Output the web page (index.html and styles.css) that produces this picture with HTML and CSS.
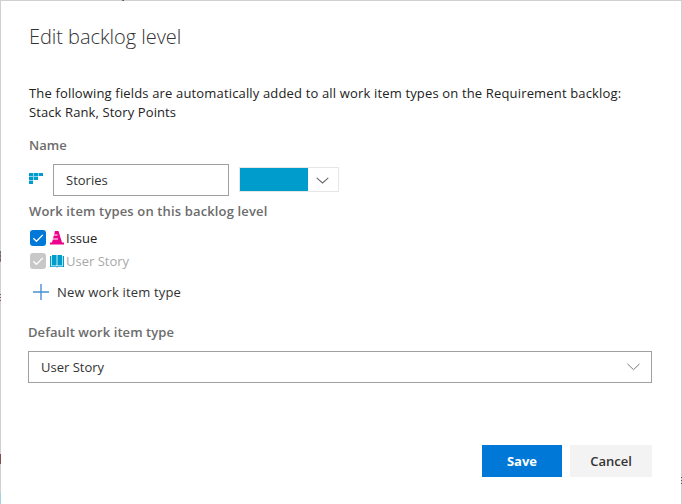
FILE: index.html
```html
<!DOCTYPE html>
<html lang="en">
<head>
<meta charset="utf-8">
<title>Edit backlog level</title>
<link rel="stylesheet" href="styles.css">
</head>
<body>
<main class="dialog">
  <h1 class="title"><span>Edit backlog level</span></h1>
  <p class="intro"><span class="intro-a">The following fields are automatically added to all work item types on the Requirement backlog:</span><br><span class="intro-b">Stack Rank, Story Points</span></p>
  <h2 class="label label-name"><span>Name</span></h2>
  <div class="name-row">
    <svg class="backlog-icon" width="15" height="12" viewBox="0 0 15 12" fill="#009ccc"><path fill="#8fd3ea" d="M0 0h14v3H9v4H4v4H0z"/><path d="M0 0h4v3H0zM5 0h4v3H5zM10 0h4v3h-4zM0 4h4v3H0zM5 4h4v3H5zM0 8h4v3H0z"/></svg>
    <div class="name-input"><span>Stories</span></div>
    <div class="color-picker">
      <div class="swatch"></div>
      <svg class="picker-chevron" width="13" height="8" viewBox="0 0 13 8" fill="none" stroke="#666" stroke-width="1.1"><path d="M.7.9l5.8 5L12.300.9"/></svg>
    </div>
  </div>
  <h2 class="label label-types"><span>Work item types on this backlog level</span></h2>
  <div class="type-row">
    <span class="check"><svg width="16" height="16" viewBox="0 0 16 16" fill="none" stroke="#fff" stroke-width="1.3"><path d="M3.300 8.200l3.200 3.100 6.300-6.400"/></svg></span>
    <svg class="type-icon" width="14" height="14" viewBox="0 0 14 14"><path fill="#ec008c" d="M5 0h3.500L12 11.500h2v2H0v-2h2z"/><path d="M3.500 4h4M2.500 8h5.500" stroke="#fff" stroke-width="1.200"/></svg>
    <span class="type-name issue">Issue</span>
  </div>
  <div class="type-row disabled">
    <span class="check"><svg width="16" height="16" viewBox="0 0 16 16" fill="none" stroke="#fff" stroke-width="1.3"><path d="M3.300 8.200l3.200 3.100 6.300-6.400"/></svg></span>
    <svg class="type-icon" width="14" height="14" viewBox="0 0 14 14"><path fill="#009ccc" d="M2 1h4.600v10.500H2zM7.400 1H12v10.500H7.400zM0 2h1.300v10.300h11.400V2H14v11H8l-1 .600L6 13H0z"/></svg>
    <span class="type-name story">User Story</span>
  </div>
  <div class="add-row">
    <svg width="16" height="16" viewBox="0 0 16 16" fill="none" stroke="#4a90d4" stroke-width="1.400"><path d="M8 0v16M0 8h16"/></svg>
    <span class="add-text">New work item type</span>
  </div>
  <h2 class="label label-default"><span>Default work item type</span></h2>
  <div class="select">
    <span class="select-text">User Story</span>
    <svg width="13" height="8" viewBox="0 0 13 8" fill="none" stroke="#777" stroke-width="1"><path d="M.5.900l6 5.800L12.500.900"/></svg>
  </div>
  <div class="actions">
    <div class="button save"><span>Save</span></div>
    <div class="button cancel"><span>Cancel</span></div>
  </div>
  <i class="peek peek-top"></i>
  <i class="peek peek-a"></i>
  <i class="peek peek-b"></i>
  <i class="peek peek-c"></i>
  <i class="peek peek-d"></i>
  <i class="peek peek-e"></i>
</main>
</body>
</html>
```

FILE: styles.css
```css
* { box-sizing: border-box; }
body { margin: 0; background: #fff; font-family: "Open Sans", "Noto Sans", sans-serif; font-size: 13px; color: #222; }
svg { display: block; flex: none; }
h1, h2, p { margin: 0; }
.dialog {
  position: relative;
  width: 682px; height: 504px; padding: 0 29px 0 28px;
  border: 1px solid #d0d0d0; border-bottom: 0;
  display: flex; flex-direction: column; white-space: nowrap;
}
.title { height: 30px; margin-top: 21px; line-height: 30px; font-size: 20px; font-weight: 300; color: #333; letter-spacing: -0.05px; }
.intro { height: 38px; margin-top: 32px; line-height: 19px; }
.intro-a { letter-spacing: 0.157px; }
.intro-b { letter-spacing: 0.1px; }
.label { height: 20px; line-height: 20px; font-size: 13px; font-weight: 600; color: #6c6c6c; }
.label-name { margin-top: 13px; }
.name-row { display: flex; height: 32px; margin-top: 9px; }
.backlog-icon { margin: 9px 9px 0 0; }
.name-input { width: 176px; height: 32px; border: 1px solid #a0a0a0; padding-left: 12px; line-height: 30px; color: #333; }
.color-picker { display: flex; width: 100px; height: 25px; margin: 3px 0 0 10px; border: 1px solid #e6e6e6; }
.swatch { width: 68px; height: 23px; background: #009ccc; }
.picker-chevron { margin: 9px 0 0 8px; }
.label-types { margin-top: 5px; letter-spacing: 0.14px; }
.type-row { display: flex; align-items: center; height: 23px; color: #222; }
.label-types + .type-row { margin-top: 5px; }
.check { width: 16px; height: 16px; margin-left: 1px; background: #0078d7; border-radius: 3px; }
.type-icon { margin: 1px 2px 0 4px; }
.disabled { color: #a8a8a8; }
.disabled .check { background: #c8c8c8; }
.add-row { display: flex; align-items: center; height: 24px; margin: 8px 0 0 4px; color: #333; }
.add-text { margin-left: 8px; letter-spacing: 0.17px; }
.label-default { margin: 18px 0 0 -1px; letter-spacing: 0.08px; }
.select { display: flex; align-items: center; justify-content: space-between; height: 32px; margin: 9px 0 0 -1px; padding: 0 11px 0 12px; border: 1px solid #a0a0a0; color: #333; }
.actions { display: flex; justify-content: flex-end; gap: 8px; margin-top: 62px; }
.button { height: 32px; line-height: 32px; text-align: center; font-weight: 600; }
.save { width: 80px; background: #0078d7; color: #fff; font-weight: 700; }
.cancel { width: 82px; background: #f3f3f3; color: #333; }
/* Slivers of the page behind the dialog */
.peek { position: absolute; left: -1px; width: 1px; }
.peek-top { left: 121px; top: -1px; width: 2px; height: 1px; background: linear-gradient(90deg, #b0623c 50%, #3c5a90 50%); }
.peek-a { top: 250px; height: 11px; background: repeating-linear-gradient(#5a6a90 0 2px, #b0784c 2px 4px); }
.peek-b { top: 293px; height: 7px; background: repeating-linear-gradient(#8a5058 0 1px, #d0d0d0 1px 3px); }
.peek-c { top: 453px; height: 10px; background: #804c4c; }
.peek-d { top: 492px; height: 11px; background: #a4d0e0; }
.peek-e { left: 680px; top: 476px; height: 7px; background: repeating-linear-gradient(#505050 0 1px, #d0d0d0 1px 3px); }
```
